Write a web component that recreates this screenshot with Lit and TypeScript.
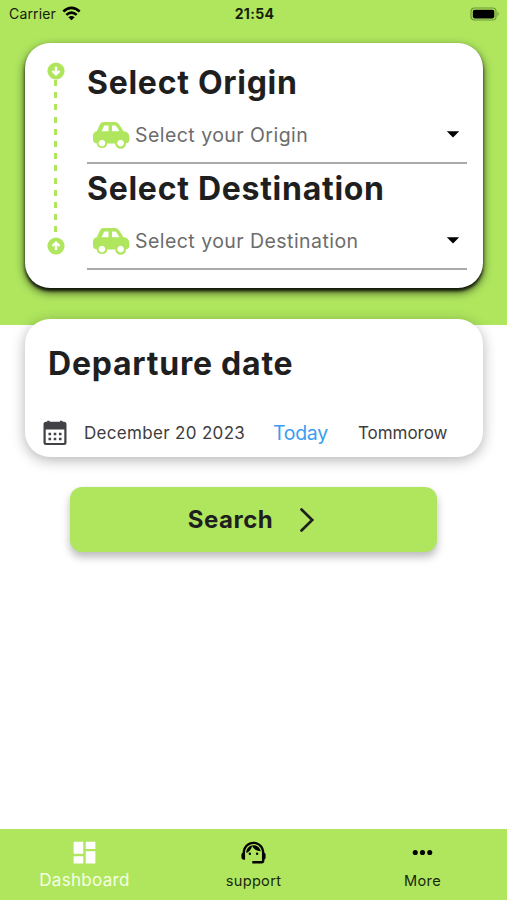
import { LitElement, html, css, svg } from "lit";
import { customElement, property } from "lit/decorators.js";

const pin = (up: boolean) => html`<svg class="pin" viewBox="0 0 18 18">
  <circle cx="9" cy="9" r="8.6" fill="#afe65e" />
  ${up
    ? svg`<path d="M9 13.2V7M5.5 9 9 5.600l3.500 3.400" fill="none" stroke="#fff" stroke-width="2.400"/>`
    : svg`<path d="M9 4.8V11M5.500 9 9 12.400l3.500-3.400" fill="none" stroke="#fff" stroke-width="2.400"/>`}
</svg>`;

@customElement("place-picker")
export class PlacePicker extends LitElement {
  @property() heading = "";
  @property() hint = "";

  static styles = css`
    :host { display: block; height: 106px; }
    .heading { height: 44px; line-height: 44px; font-size: 32px; font-weight: 650; letter-spacing: 0.72px; color: #1f1f1f; white-space: nowrap; }
    .field { box-sizing: border-box; display: flex; align-items: center; height: 59px; padding: 2px 7px 0 5px; border-bottom: 2px solid #a9a9a9; }
    .car { width: 38px; height: 28px; flex: none; }
    .hint { flex: 1; margin-left: 5px; font-size: 19.5px; letter-spacing: 0.45px; color: #6c6c6c; white-space: nowrap; }
    .caret { width: 14px; height: 7px; }
  `;

  render() {
    return html`
      <div class="heading">${this.heading}</div>
      <div class="field">
        <svg class="car" viewBox="0 0 38 28">
          <path fill="#afe65e" fill-rule="evenodd" d="M11.500 1H22.500Q25.500 1 27 3.200L31.500 10.300Q37.300 10.800 37.300 16V19Q37.300 22 34 22.300A5.400 5.400 0 0 1 23.200 22.500H15.300A5.400 5.400 0 0 1 4.600 22.300Q1 22 1 19V14.500Q1 11.200 4.800 10.300L8 3.200Q9.200 1 11.500 1ZM12.300 4.500 9.500 10.300H16.500V4.500ZM20 4.500V10.300H27.500L24.300 5.300Q23.800 4.500 23 4.500ZM9.950 18.800A3.300 3.300 0 1 0 9.960 18.800ZM28.600 18.800A3.300 3.300 0 1 0 28.610 18.800Z" />
        </svg>
        <span class="hint">${this.hint}</span>
        <svg class="caret" viewBox="0 0 14 7"><path d="M.8.3h12.400L7 6.500Z" /></svg>
      </div>
    `;
  }
}

@customElement("app-root")
export class AppRoot extends LitElement {
  static styles = css`
    :host { display: flex; flex-direction: column; box-sizing: border-box; height: 900px; background: linear-gradient(#afe65e 325px, #fff 325px); font-family: Inter, "Liberation Sans", sans-serif; color: #1f1f1f; overflow: hidden; }
    .status { display: grid; grid-template-columns: 1fr auto 1fr; align-items: center; height: 27px; padding: 0 7px 0 9px; color: #17200a; }
    .carrier { display: flex; align-items: center; gap: 6px; font-size: 14px; letter-spacing: 0.15px; }
    .wifi { width: 19px; height: 15px; }
    .time { font-size: 14px; font-weight: 650; letter-spacing: 0.35px; }
    .battery { justify-self: end; width: 30px; height: 14px; }
    .card { box-sizing: border-box; margin: 0 24px 0 25px; border-radius: 25px; background: #fff; }
    .route { display: flex; height: 245px; margin-top: 16px; padding: 18px 16px 0 22px; box-shadow: 0 4px 10px rgba(0,0,0,.7), 0 3px 3px rgba(0,0,0,.75); }
    .track { display: flex; flex-direction: column; align-items: center; width: 18px; height: 193px; margin: 1px 22px 0 0; }
    .pin { width: 18px; height: 18px; flex: none; }
    .dash { width: 3px; margin-right: 1px; flex: 1; background: repeating-linear-gradient(#afe65e 0 6px, transparent 6px 12.200px); }
    .places { flex: 1; }
    .date { height: 138px; margin-top: 31px; padding: 24px 18px 0; box-shadow: 0 3px 14px rgba(0,0,0,.3); }
    .title { height: 42px; line-height: 42px; padding-left: 5px; font-size: 32px; font-weight: 650; letter-spacing: 0.77px; white-space: nowrap; }
    .options { display: flex; align-items: center; height: 30px; margin-top: 33px; font-size: 17px; color: #3d3d3d; white-space: nowrap; }
    .calendar { width: 24px; height: 26px; margin-right: 17px; }
    .day { width: 189px; letter-spacing: 0.32px; }
    .today { width: 85px; font-size: 19.500px; letter-spacing: -.3px; color: #3b9df0; }
    .tomorrow { font-size: 17px; letter-spacing: -.05px; }
    .search { display: flex; align-items: center; justify-content: center; gap: 26px; width: 367px; height: 65px; margin: 30px 0 0 70px; padding: 0 4px 0 0; box-sizing: border-box; border: 0; border-radius: 12px; background: #afe65e; box-shadow: 0 5px 8px rgba(0,0,0,.27); font: 650 24px Inter, sans-serif; letter-spacing: .5px; color: #1f1f1f; }
    .chevron { width: 16px; height: 26px; }
    .tabs { display: grid; grid-template-columns: repeat(3, 1fr); height: 71px; margin-top: auto; background: #afe65e; }
    .tab { display: flex; flex-direction: column; align-items: center; padding-top: 9px; font-size: 14.600px; letter-spacing: .3px; color: #1b260c; }
    .tab svg { width: 29px; height: 29px; }
    .label { height: 28px; line-height: 28px; }
    .active { font-size: 17px; color: #f5ffe4; }
    .active .label { line-height: 27px; }
  `;

  render() {
    return html`
      <header class="status">
        <div class="carrier">Carrier
          <svg class="wifi" viewBox="0 0 19 15" fill="none" stroke="#000" stroke-width="2.500"><path d="M1.300 5.500Q9.500-1.800 17.700 5.500M4.300 8.900Q9.500 4.400 14.700 8.900"/><path d="M6.400 11.200Q9.500 8.600 12.600 11.200L9.500 14.200Z" fill="#000" stroke="none"/></svg>
        </div>
        <div class="time">21:54</div>
        <svg class="battery" viewBox="0 0 30 14"><rect x="1" y="1" width="25" height="12" rx="3.500" fill="none" stroke="#6f9638" stroke-width="1.200"/><rect x="2.800" y="2.700" width="21.500" height="8.700" rx="1.800"/><path d="M27.500 4.800Q30 7 27.500 9.200Z" fill="#6f9638"/></svg>
      </header>
      <section class="card route">
        <div class="track">${pin(false)}<div class="dash"></div>${pin(true)}</div>
        <div class="places">
          <place-picker heading="Select Origin" hint="Select your Origin"></place-picker>
          <place-picker heading="Select Destination" hint="Select your Destination"></place-picker>
        </div>
      </section>
      <section class="card date">
        <div class="title">Departure date</div>
        <div class="options">
          <svg class="calendar" viewBox="0 0 24 26"><path fill="#414146" fill-rule="evenodd" d="M4.200 1.800V.8h2.500v1H17V.8h2.500v1H21Q23.500 1.800 23.500 4.300V22.500Q23.500 25 21 25H3Q.5 25 .5 22.500V4.300Q.5 1.800 3 1.800ZM2.700 9.500V22.300Q2.700 23 3.500 23H20.500Q21.300 23 21.300 22.300V9.500Z"/><path d="M5.500 14h13M5.500 19h13" stroke="#414146" stroke-width="2.600" stroke-dasharray="2.600"/></svg>
          <span class="day">December 20 2023</span>
          <span class="today">Today</span>
          <span class="tomorrow">Tommorow</span>
        </div>
      </section>
      <button class="search">Search
        <svg class="chevron" viewBox="0 0 16 26"><path d="M2.500 2.500 13.200 13 2.500 23.500" fill="none" stroke="#1f1f1f" stroke-width="2.700" stroke-linecap="round"/></svg>
      </button>
      <nav class="tabs">
        <div class="tab active">
          <svg viewBox="0 0 24 24" fill="#fff"><path d="M3 13h8V3H3v10zm0 8h8v-6H3v6zm10 0h8V11h-8v10zm0-18v6h8V3h-8z"/></svg>
          <span class="label">Dashboard</span>
        </div>
        <div class="tab">
          <svg viewBox="0 0 24 24"><path d="M21 12.220C21 6.730 16.740 3 12 3c-4.690 0-9 3.650-9 9.280-.6.340-1 .980-1 1.720v2c0 1.100.9 2 2 2h1v-6.100c0-3.870 3.130-7 7-7s7 3.130 7 7V19h-8v2h8c1.100 0 2-.9 2-2v-1.220c.590-.310 1-.920 1-1.640v-2.300c0-.7-.410-1.310-1-1.620z"/><circle cx="9" cy="13" r="1"/><circle cx="15" cy="13" r="1"/><path d="M18 11.030C17.520 8.180 15.040 6 12.050 6c-3.030 0-6.290 2.510-6.030 6.450 2.470-1.010 4.330-3.210 4.860-5.890 1.310 2.630 4 4.440 7.120 4.470z"/></svg>
          <span class="label">support</span>
        </div>
        <div class="tab">
          <svg viewBox="0 0 24 24"><circle cx="6" cy="12" r="2.100"/><circle cx="12" cy="12" r="2.100"/><circle cx="18" cy="12" r="2.100"/></svg>
          <span class="label">More</span>
        </div>
      </nav>
    `;
  }
}
